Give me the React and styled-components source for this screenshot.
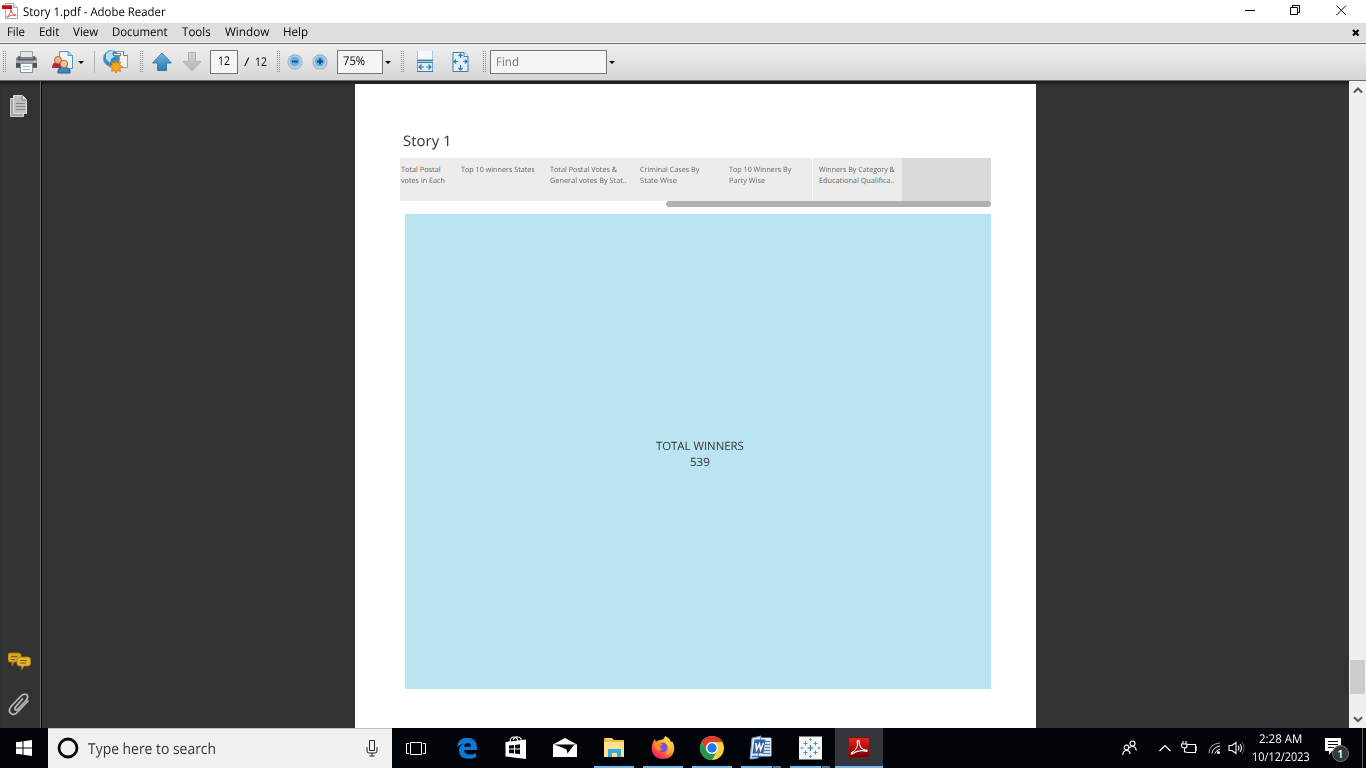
import React, { useLayoutEffect, useRef, useState } from "react";
import styled, { createGlobalStyle } from "styled-components";

const GlobalStyle = createGlobalStyle`
  * { box-sizing: border-box; }
  body { margin: 0; background: #333; overflow: hidden; font-family: "Open Sans", "Noto Sans", sans-serif; }
  svg { display: block; }
`;

const Screen = styled.div`
  width: 1366px;
  height: 768px;
  display: flex;
  flex-direction: column;
  overflow: hidden;
`;

const LineText = styled.span`
  flex: none;
  display: block;
  white-space: nowrap;
  width: ${(p) => p.$w}px;
  height: ${(p) => p.$h}px;
  line-height: ${(p) => p.$h}px;
  margin-left: ${(p) => p.$gap || 0}px;
  font-size: ${(p) => p.$size}px;
  color: ${(p) => p.$color};
  text-rendering: geometricPrecision;
`;
const Glyphs = styled.span`
  display: inline-block;
  transform-origin: 0 50%;
`;

const TitleBar = styled.header`
  height: 23px;
  flex: none;
  background: #fff;
  display: flex;
  align-items: flex-start;
  padding: 3px 0 0 2px;
`;
const TitleText = styled.div`
  margin: 1px auto 0 5px;
`;
const WindowButtons = styled.div`
  display: flex;
  gap: 35px;
  padding: 1px 19px 0 0;
`;

const MenuBar = styled.nav`
  height: 20px;
  flex: none;
  background: #dedede;
  border-bottom: 1px solid #f6f6f6;
  display: flex;
  padding: 1px 6px 0 7px;
  gap: 14px;
`;
const CloseDoc = styled.div`
  margin: 4px 0 0 auto;
`;

const ToolBar = styled.div`
  height: 38px;
  flex: none;
  display: flex;
  align-items: center;
  background: linear-gradient(#f0f0f0, #d5d5d5);
  border-top: 1px solid #6a6d6a;
  border-bottom: 1px solid #6a6d6a;
`;
const Tool = styled.div`
  flex: none;
  width: ${(p) => p.$w}px;
  margin-left: ${(p) => p.$gap}px;
`;
const Grip = styled.div`
  flex: none;
  width: 4px;
  height: 22px;
  margin-left: ${(p) => p.$gap}px;
  background-image: linear-gradient(90deg, #8c8c8c 1px, transparent 1px);
  background-size: 2px 2px;
  mask-image: repeating-linear-gradient(#000 0 1px, transparent 1px 2px);
`;
const Divider = styled.div`
  width: 1px;
  height: 22px;
  margin-left: 10px;
  background: #b5b5b5;
`;
const Field = styled.div`
  flex: none;
  width: ${(p) => p.$w}px;
  height: 24px;
  margin-left: ${(p) => p.$gap}px;
  padding: ${(p) => p.$top || 2}px 0 0 ${(p) => p.$pad}px;
  border: 1px solid #777;
  background: #f5f5f5;
`;
const Caret = styled.i`
  flex: none;
  margin-left: ${(p) => p.$gap}px;
  width: 6px;
  border: 3px solid transparent;
  border-top-color: #000;
  border-bottom: 0;
`;

const Body = styled.main`
  height: 647px;
  flex: none;
  display: flex;
  background: #333;
  box-shadow: inset 0 4px 3px -1px #1f1f1f;
`;
const Rail = styled.aside`
  width: 42px;
  border-right: 1px solid #000;
  box-shadow: inset -1px 0 #6b6b6b;
  display: flex;
  flex-direction: column;
  padding: 13px 0 12px 8px;
`;
const RailBottom = styled.div`
  margin-top: auto;
  display: flex;
  flex-direction: column;
  gap: 20px;
`;
const Viewer = styled.section`
  flex: 1;
  padding: 3px 0 0 313px;
`;
const Paper = styled.article`
  width: 681px;
  height: 644px;
  background: #fff;
  padding: 48px 45px 0;
`;
const StoryTitle = styled.div`
  padding-left: 2.5px;
  height: 26px;
`;
const Strip = styled.div`
  width: 591px;
  height: 43px;
  display: grid;
  grid-template-columns: 54px repeat(6, 89.5px);
  background: #ececec;
`;
const StoryPoint = styled.div`
  padding: 7px 0 0 ${(p) => (p.$first ? 1 : p.$split ? 6 : 6.5)}px;
  background: ${(p) => (p.$active ? "#dadada" : "transparent")};
  border-left: ${(p) => (p.$split ? "1px solid #fff" : "0")};
`;
const StripThumb = styled.div`
  width: 325px;
  height: 6px;
  margin-left: 266px;
  border-radius: 3px;
  background: #b1b1b1;
`;
const Sheet = styled.div`
  width: 586px;
  height: 475px;
  margin: 7px 0 0 5px;
  padding: 225px 0 0 4px;
  background: #bae4f2;
  display: flex;
  flex-direction: column;
  align-items: center;
`;
const ScrollBar = styled.div`
  width: 17px;
  background: #f0f0f0;
  display: flex;
  flex-direction: column;
  align-items: center;
  padding: 6px 0 5px;
`;
const ScrollThumb = styled.div`
  width: 15px;
  height: 34px;
  margin: auto 0 22px;
  background: #cdcdcd;
`;

const TaskBar = styled.footer`
  height: 40px;
  flex: none;
  display: flex;
  background: #010409;
`;
const Start = styled.div`
  width: 48px;
  padding: 12px 0 0 16px;
`;
const Search = styled.div`
  width: 344px;
  background: #f1f1f1;
  border-top: 1px solid #bcbcbc;
  display: flex;
  align-items: center;
  padding: 0 14px 1px 9px;
  justify-content: space-between;
`;
const SearchPrompt = styled.div`
  display: flex;
  align-items: flex-end;
  gap: 9px;
`;
const Apps = styled.div`
  display: flex;
  gap: 1px;
`;
const AppButton = styled.div`
  width: 48px;
  height: 40px;
  margin-right: ${(p) => p.$after || 0}px;
  display: flex;
  flex-direction: column;
  align-items: center;
  justify-content: space-between;
  padding-top: 7px;
  background: ${(p) => (p.$active ? "#33363a" : "transparent")};
`;
const Running = styled.div`
  width: ${(p) => (p.$active ? 48 : 40)}px;
  height: 2px;
  background: ${(p) =>
    p.$stacked ? "linear-gradient(90deg,#76b9ed 31px,#17212b 31px 32px,#4f7c9f 32px)" : "#76b9ed"};
`;
const Tray = styled.div`
  margin-left: auto;
  display: flex;
  align-items: center;
`;
const TrayItem = styled.div`
  width: ${(p) => p.$w}px;
  margin-right: ${(p) => p.$after}px;
`;
const Clock = styled.div`
  width: 62px;
  margin-right: 12px;
  padding-bottom: 1px;
`;
const Notifications = styled.div`
  width: 24px;
  height: 27px;
  margin-right: 13px;
  display: grid;
`;
const Badge = styled.span`
  grid-area: 1 / 1;
  align-self: end;
  justify-self: end;
  width: 17px;
  height: 17px;
  border: 1px solid #777;
  border-radius: 50%;
  background: #35383c;
  color: #fff;
  font-size: 11px;
  font-weight: 600;
  line-height: 15px;
  text-align: center;
`;
const NoteIcon = styled.svg`
  grid-area: 1 / 1;
`;
const PeekEdge = styled.div`
  width: 4px;
  height: 40px;
  border-left: 1px solid #5b5d60;
`;

/* One line of text, condensed or widened to fill its measure */
function Line({ children, w, size = 12, h = 16, color = "#000", gap }) {
  const ref = useRef(null);
  const [stretch, setStretch] = useState(1);
  useLayoutEffect(() => {
    const fit = () => setStretch(w / ref.current.offsetWidth);
    fit();
    document.fonts.ready.then(fit);
  }, [w]);
  return (
    <LineText $w={w} $h={h} $size={size} $color={color} $gap={gap}>
      <Glyphs ref={ref} style={{ transform: `scaleX(${stretch})` }}>{children}</Glyphs>
    </LineText>
  );
}

const acrobatPath = "M2 14C7 11 9 6 8 2c0-2 2-2 2 0 0 5 3 9 8 9 2 1 0 2-2 1-5-1-9 0-13 3-2 1-2 0-1-1z";

const PdfIcon = () => (
  <svg width="16" height="17" viewBox="0 0 16 17">
    <path d="M3.500 .5h8l4 4v11h-12z" fill="#fff" stroke="#a9a9a9" />
    <path d="M11.500 .5v4h4" fill="#e9e9e9" stroke="#a9a9a9" />
    <path d="M0 2h10v4H0z" fill="#c70d12" />
    <path d="M0 2h10v1H0z" fill="#e33b3b" />
    <g transform="translate(4 6) scale(.54)"><path d={acrobatPath} fill="none" stroke="#e04444" strokeWidth="1.700" /></g>
  </svg>
);

const Printer = () => (
  <svg width="24" height="24" viewBox="0 0 24 24">
    <path d="M5.500 1.500h12v8h-12z" fill="#dfe8ec" stroke="#9aa3a8" />
    <path d="M1 9q0-2 2-2h17q2 0 2 2v9H1z" fill="#7d858b" />
    <path d="M4 6v4h15V6" fill="none" stroke="#4a5156" strokeWidth="1.500" />
    <path d="M1 10.500h21v2.500H1z" fill="#a3abb0" />
    <path d="M1 13h21v4.500H1z" fill="#4c5358" />
    <path d="M5.500 13.500h12v9h-12z" fill="#f5fafc" stroke="#83939d" />
    <path d="M8 16.500h7M8 19.500h7" stroke="#a9bac4" />
    <circle cx="19.500" cy="11.500" r="1" fill="#cde7ba" />
  </svg>
);
const Collaborate = () => (
  <svg width="23" height="24" viewBox="0 0 23 24">
    <path d="M7.500 1.500h9l4 4v13h-13z" fill="#edf5fc" stroke="#5a93bf" />
    <path d="M16 1.500v4h5" fill="#b8d8ef" stroke="#5a93bf" />
    <path d="M0 18q0-6 5-6t6 5v1z" fill="#a82e47" />
    <circle cx="6" cy="10" r="3.500" fill="#f0b585" stroke="#b66b3f" />
    <path d="M6 23v-3q2-3 6-3t6 3v3z" fill="#3d88c0" stroke="#28618d" />
    <circle cx="12" cy="14" r="3.700" fill="#f6c193" stroke="#b87343" />
  </svg>
);
const GlobeStar = () => (
  <svg width="27" height="26" viewBox="0 0 27 26">
    <path d="M11.500 2.500h9l4 4v12h-13z" fill="#f1f2f2" stroke="#9b9b9b" />
    <path d="M20.500 2.500v4h4" fill="#fff" stroke="#777" />
    <circle cx="8.500" cy="9.500" r="8" fill="#3989c3" stroke="#6399c1" />
    <path d="M3 5q3-4 8-3.500L9 5l3 2-4 3-1 4-4-4z" fill="#b9dff4" />
    <path d="M10 5.500h8" stroke="#7a7f82" strokeWidth="3" />
    <path d="M11 5.500h6" stroke="#f8f8f8" />
    <path d="M13 11.500l1.500 2.500 3-1-.8 3 2.800 1.700-2.800 1.600.8 3-3-.8L13 24l-1.500-2.500-3 .8.8-3L6.500 17.700 9.300 16l-.8-3 3 1z" fill="#f7a51f" stroke="#c8730d" strokeWidth=".8" />
  </svg>
);
const Arrow = ({ down }) => (
  <svg width="20" height="20" viewBox="0 0 20 20">
    <defs>
      <linearGradient id={down ? "ad" : "au"} x2="0" y2="1">
        <stop stopColor={down ? "#d0d0d0" : "#73b7e2"} />
        <stop offset="1" stopColor={down ? "#b5b5b5" : "#2879b8"} />
      </linearGradient>
    </defs>
    <path
      d={down ? "M6.500.5h7v9h5.500L10 18.800 1 9.500h5.500z" : "M10 1l9.500 10h-5v7.500h-9V11h-5z"}
      fill={down ? "url(#ad)" : "url(#au)"}
      stroke={down ? "#aaa" : "#2a6d9f"}
      strokeWidth=".8"
    />
  </svg>
);
const ZoomDot = ({ plus }) => (
  <svg width="16" height="16" viewBox="0 0 16 16">
    <circle cx="8" cy="8" r="7" fill="#a9d5ef" stroke="#a6b6c1" strokeWidth="1.300" />
    <circle cx="7.800" cy="7.500" r="4.800" fill="#69b0de" />
    <path d={plus ? "M5 7.500h6M8 4.500v6" : "M5 7.500h6"} stroke="#0c4b8c" strokeWidth="1.800" />
  </svg>
);
const FitWidth = () => (
  <svg width="18" height="22" viewBox="0 0 18 22">
    <path d="M1.500 0v9h15V0" fill="#f5f9fc" stroke="#b1c5d3" />
    <path d="M1 9.500h16" stroke="#3d7daa" strokeWidth="1.500" />
    <path d="M1.500 20V11.500h15V20" fill="#ddecf5" stroke="#78a3c0" />
    <path d="M1 20.500h16M1 11.500h16" stroke="#3d7daa" />
    <path d="M3 16h5M10 16h5M5.500 13.500L3 16l2.500 2.500M12.500 13.500L15 16l-2.500 2.500" fill="none" stroke="#2d78ad" strokeWidth="1.200" />
  </svg>
);
const FitPage = () => (
  <svg width="17" height="22" viewBox="0 0 17 22">
    <path d="M1 1.500h11l4 4v15H1z" fill="#e4f0f8" stroke="#3d7fae" />
    <path d="M12 1.500v4h4" fill="#fff" stroke="#3d7fae" />
    <path d="M8.500 3v4M8.500 14v5M2 10.500h4M11 10.500h4M6.500 5l2-2 2 2M6.500 17l2 2 2-2M4 8.500l-2 2 2 2M13 8.500l2 2-2 2" fill="none" stroke="#2d78ad" strokeWidth="1.200" />
  </svg>
);
const Pages = () => (
  <svg width="20" height="24" viewBox="0 0 20 24">
    <path d="M2.500 4.500h13v18h-13z" fill="#a5a5a5" stroke="#d0d0d0" />
    <path d="M5.500 1.500h9l4 4v14h-13z" fill="#c0c0c0" stroke="#dedede" />
    <path d="M14 1.500v4.500h4.500" fill="#e3e3e3" stroke="#777" />
    <path d="M8 9.500h9M8 12.500h9M8 15.500h9" stroke="#858585" />
  </svg>
);
const Comments = () => (
  <svg width="24" height="20" viewBox="0 0 24 20">
    <path d="M2 1h9q2 0 2 2v5q0 2-2 2H6l-2 4v-4H2q-2 0-2-2V3q0-2 2-2z" fill="#d9a51e" stroke="#a87611" strokeWidth=".8" />
    <path d="M11 5h9q2.500 0 2.500 2.500v4Q22.500 14 20 14h-4l-2.500 4v-4H11q-2 0-2-2.500v-4Q9 5 11 5z" fill="#e5b828" stroke="#a87611" strokeWidth=".8" />
    <path d="M3 4.500h6M3 7.500h4M12 8.500h7M12 11h6" stroke="#795819" strokeWidth="1.200" />
  </svg>
);
const Clip = () => (
  <svg width="23" height="24" viewBox="0 0 23 24">
    <path d="M14.500 7L7.500 15q-1.500 3 .8 3 1-.2 2-1.500L18 8.500q3-4 .5-6-3-1.500-6 2L3.500 14q-4 5-.5 7.500Q6.500 24 10.500 19l9.500-10" fill="none" stroke="#b5b5b5" strokeWidth="1.800" strokeLinecap="round" />
  </svg>
);
const Chevron = ({ down }) => (
  <svg width="10" height="7" viewBox="0 0 10 7">
    <path d={down ? "M1 1.200l4 4 4-4" : "M1 5.500l4-4 4 4"} fill="none" stroke="#555" strokeWidth="2" />
  </svg>
);

const EdgeIcon = () => (
  <svg width="22" height="26" viewBox="0 -2 22 26">
    <path d="M1 10Q2 .8 11.500.8 21 1.200 21 10.500V13H8q.5 4.500 6 4.500 3.500 0 6-1.600v4q-3 1.900-7 1.900Q3 21.800 3 13.500q0-5 5-7Q4 7 1 10zm7-.3h7Q15 6 11.800 6 8.500 6.300 8 9.700z" fill="#0a7bd9" />
  </svg>
);
const Store = () => (
  <svg width="22" height="26" viewBox="0 0 22 26">
    <path d="M5 7q0-5 4-5 3 0 4 4M8 5q2-4 5-3 3 0 4 5" fill="none" stroke="#fff" strokeWidth="1.200" />
    <path d="M.5 7L21 4.500V24L.5 21.500z" fill="#fff" />
    <path d="M4 10.500l5-.5v3.500H4zM10 10l5-.7v4.200h-5zM4 14.500h5v4l-5-.6zM10 14.500h5v4.700l-5-.6z" fill="#05070b" />
  </svg>
);
const Mail = () => (
  <svg width="24" height="26" viewBox="0 0 24 26">
    <path d="M0 9.500L12 3l12 6.500V22H0z" fill="#fff" />
    <path d="M1 9.500h22L12 13.500z" fill="#05070b" />
    <path d="M10.500 13L21 10l-6.500 8.500-1-4z" fill="#05070b" />
  </svg>
);
const Folder = () => (
  <svg width="22" height="26" viewBox="0 0 22 26">
    <path d="M1 4q0-1 1-1h7l2 2h10v16H1z" fill="#f1bd35" />
    <path d="M1 7h20v15H1z" fill="#ffe28b" />
    <path d="M3 4h6" stroke="#fff3bd" />
    <path d="M5 22v-8h13v8h-4v-4H9v4z" fill="#36a9e1" />
  </svg>
);
const Firefox = () => (
  <svg width="24" height="26" viewBox="0 0 24 26">
    <defs>
      <linearGradient id="ff" x1=".9" y1="0" x2=".2" y2="1">
        <stop stopColor="#fff04a" /><stop offset=".4" stopColor="#ffb02e" /><stop offset=".75" stopColor="#ff4a3d" /><stop offset="1" stopColor="#e31587" />
      </linearGradient>
    </defs>
    <path d="M14 1q5 2 6 6 1 0 1-1 3 5 2 10-2 8-11 8T1 16Q0 9 4 4l1 3q2-2 4-2 4 0 5-4z" fill="url(#ff)" />
    <circle cx="11.500" cy="12.500" r="5" fill="#7652d8" />
    <path d="M4 8q3-2 5 0l3 1-3 2.500q0 2 3 2.500-3 3-6 1-3-2-2-7z" fill="#ff8b24" />
    <path d="M14 2q1 4 4 6 3 3 1 8-1 3-4 4 6-6 2-10-4-3-3-8z" fill="#ffd43a" />
  </svg>
);
const Chrome = () => (
  <svg width="24" height="26" viewBox="0 0 24 26">
    <circle cx="12" cy="13" r="12" fill="#ffcd40" />
    <path d="M1.600 7A12 12 0 0 1 22.400 7H12a6 6 0 0 0-5.200 9z" fill="#e33b2e" />
    <path d="M1.600 7l5.200 9a6 6 0 0 0 10.400 0L12 25A12 12 0 0 1 1.600 7z" fill="#219653" />
    <circle cx="12" cy="13" r="6" fill="#fff" />
    <circle cx="12" cy="13" r="4.700" fill="#2379e8" />
  </svg>
);
const Word = () => (
  <svg width="24" height="26" viewBox="0 0 24 26">
    <path d="M6 3h16v18H6z" fill="#fff" stroke="#b7c6df" />
    <path d="M16 6.500h5M16 9.500h5M16 12.500h5M15 15.500h6M14 18.500h7" stroke="#5278b4" strokeWidth="1.500" />
    <path d="M3 3q5-1 9-2L9 23q-5 1-8 1Q2 14 3 3z" fill="#d8e6f7" stroke="#7493c1" />
    <path d="M5.500 4.500h11l-2 14h-11z" fill="#3563a8" />
    <path d="M7 8l.5 7 3-6 1 6 3-7" fill="none" stroke="#fff" strokeWidth="1.500" />
    <path d="M3 21.500h9" stroke="#3c69af" strokeWidth="1.500" />
  </svg>
);
const Tableau = () => (
  <svg width="23" height="26" viewBox="0 0 23 26">
    <path d="M0 1.500h23v23H0z" fill="#f5f5f3" />
    <path d="M8.500 13h6M11.500 10v6" stroke="#337eac" strokeWidth="1.200" />
    <path d="M4.500 8.500h4M6.500 6.500v4M14.500 8.500h4M16.500 6.500v4M4.500 17.500h4M6.500 15.500v4M14.500 17.500h4M16.500 15.500v4" stroke="#5b8da9" />
    <path d="M10 4.500h3M11.500 3v3M10 21.500h3M11.500 20v3M1.500 13h3M3 11.500v3M18.500 13h3M20 11.500v3" stroke="#68a6c8" />
  </svg>
);
const AcrobatIcon = () => (
  <svg width="22" height="26" viewBox="0 0 22 26">
    <defs><linearGradient id="ac" x2="0" y2="1"><stop stopColor="#e12b21" /><stop offset=".5" stopColor="#b40c0b" /><stop offset="1" stopColor="#710306" /></linearGradient></defs>
    <path d="M.5 2.500h21v20H.5z" fill="url(#ac)" stroke="#76191a" />
    <g transform="translate(2 5) scale(.91)"><path d={acrobatPath} fill="none" stroke="#fff" strokeWidth="1.300" /></g>
  </svg>
);
const TaskView = () => (
  <svg width="20" height="26" viewBox="0 0 20 26">
    <path d="M4.500 7.500h11v12h-11zM3 8.500H.5v10H3M17 8.500h2.500v10H17" fill="none" stroke="#fff" />
  </svg>
);

const apps = [
  { Icon: TaskView, after: 2 },
  { Icon: EdgeIcon },
  { Icon: Store },
  { Icon: Mail },
  { Icon: Folder, running: true },
  { Icon: Firefox, running: true },
  { Icon: Chrome, running: true },
  { Icon: Word, running: true, stacked: true },
  { Icon: Tableau, running: true, stacked: true },
  { Icon: AcrobatIcon, running: true, active: true },
];

const menu = [["File", 18], ["Edit", 20], ["View", 25], ["Document", 56], ["Tools", 29], ["Window", 44], ["Help", 25]];

const points = [
  { lines: [["Total Postal", 40], ["votes in Each", 43.5]] },
  { lines: [["Top 10 winners States", 74]] },
  { lines: [["Total Postal Votes &", 67.5], ["General votes By Stat..", 76.5]] },
  { lines: [["Criminal Cases By", 59], ["State Wise", 36.5]] },
  { lines: [["Top 10 Winners By", 62], ["Party Wise", 36.5]] },
  { lines: [["Winners By Category &", 76], ["Educational Qualifica..", 75]], split: true },
  { lines: [], active: true },
];

export default function App() {
  return (
    <Screen>
      <GlobalStyle />
      <TitleBar>
        <PdfIcon />
        <TitleText><Line w={142.500}>Story 1.pdf - Adobe Reader</Line></TitleText>
        <WindowButtons>
          <svg width="10" height="12"><path d="M0 6.500h10" stroke="#000" /></svg>
          <svg width="11" height="12"><path d="M.5 3.500h7v7h-7zM2.500 3.500v-2h7v7h-2" fill="none" stroke="#000" /></svg>
          <svg width="11" height="12"><path d="M.5 1.500l9.500 9.500M10 1.500L.5 11" stroke="#000" /></svg>
        </WindowButtons>
      </TitleBar>
      <MenuBar>
        {menu.map(([name, w]) => <Line key={name} w={w}>{name}</Line>)}
        <CloseDoc><svg width="8" height="9"><path d="M1 2l5.500 5.500M6.500 2L1 7.500" stroke="#000" strokeWidth="2.200" /></svg></CloseDoc>
      </MenuBar>
      <ToolBar>
        <Grip $gap={3} />
        <Tool $gap={8} $w={24}><Printer /></Tool>
        <Tool $gap={13} $w={23}><Collaborate /></Tool>
        <Caret $gap={3} />
        <Divider />
        <Tool $gap={8} $w={27}><GlobeStar /></Tool>
        <Grip $gap={10} />
        <Tool $gap={8} $w={20}><Arrow /></Tool>
        <Tool $gap={10} $w={20}><Arrow down /></Tool>
        <Field $gap={8} $w={28} $pad={7}><Line w={12}>12</Line></Field>
        <Line w={5} gap={6}>/</Line>
        <Line w={12} gap={6}>12</Line>
        <Grip $gap={10} />
        <Tool $gap={6} $w={16}><ZoomDot /></Tool>
        <Tool $gap={9} $w={16}><ZoomDot plus /></Tool>
        <Field $gap={9} $w={46} $pad={5}><Line w={22.500}>75%</Line></Field>
        <Caret $gap={2} />
        <Grip $gap={10} />
        <Tool $gap={11} $w={18}><FitWidth /></Tool>
        <Tool $gap={18} $w={17}><FitPage /></Tool>
        <Grip $gap={14} />
        <Field $gap={3} $w={117} $pad={4.500} $top={3}><Line w={23} color="#757575">Find</Line></Field>
        <Caret $gap={2} />
      </ToolBar>
      <Body>
        <Rail>
          <Pages />
          <RailBottom><Comments /><Clip /></RailBottom>
        </Rail>
        <Viewer>
          <Paper>
            <StoryTitle><Line w={48.500} size={14.500} h={20} color="#333">Story 1</Line></StoryTitle>
            <Strip>
              {points.map((p, i) => (
                <StoryPoint key={i} $first={i === 0} $active={p.active} $split={p.split}>
                  {p.lines.map(([t, w]) => <Line key={t} w={w} size={7.300} h={11} color="#666">{t}</Line>)}
                </StoryPoint>
              ))}
            </Strip>
            <StripThumb />
            <Sheet>
              <Line w={88} size={11.500} color="#333">TOTAL WINNERS</Line>
              <Line w={20} size={11.500} color="#333">539</Line>
            </Sheet>
          </Paper>
        </Viewer>
        <ScrollBar>
          <Chevron />
          <ScrollThumb />
          <Chevron down />
        </ScrollBar>
      </Body>
      <TaskBar>
        <Start>
          <svg width="16" height="16"><path d="M0 2.300L6.500 1.400V7.500H0zM7.500 1.200L16 0v7.500H7.500zM0 8.500h6.500v6.100L0 13.700zM7.500 8.500H16V16l-8.500-1.200z" fill="#fff" /></svg>
        </Start>
        <Search>
          <SearchPrompt>
            <svg width="22" height="22"><circle cx="11" cy="11" r="9" fill="none" stroke="#0a0a0a" strokeWidth="2.800" /></svg>
            <Line w={128} size={15} h={20} color="#333">Type here to search</Line>
          </SearchPrompt>
          <svg width="12" height="18"><path d="M3.500 1.500h5v10h-5zM1 8v4q0 2 2 2h6q2 0 2-2V8M6 14v3M3.500 17h5" fill="none" stroke="#222" /></svg>
        </Search>
        <Apps>
          {apps.map(({ Icon, after, running, stacked, active }, i) => (
            <AppButton key={i} $after={after} $active={active}>
              <Icon />
              {running && <Running $stacked={stacked} $active={active} />}
            </AppButton>
          ))}
        </Apps>
        <Tray>
          <TrayItem $w={15} $after={22}>
            <svg width="15" height="16"><g fill="none" stroke="#fff" strokeWidth="1.200"><circle cx="10.500" cy="3.500" r="2.500" /><circle cx="4.500" cy="7.500" r="2.300" /><path d="M.8 15q.2-4.500 3.700-4.500T8 14M7.500 8q1-1.500 3-1.500 3.500 0 3.700 4" /></g></svg>
          </TrayItem>
          <TrayItem $w={12} $after={10}>
            <svg width="12" height="8"><path d="M.5 7L6 1.500 11.500 7" fill="none" stroke="#fff" strokeWidth="1.200" /></svg>
          </TrayItem>
          <TrayItem $w={16} $after={11}>
            <svg width="16" height="14"><path d="M5.500 3.500h9v8h-9M14.500 6H16v3h-1.500M2 0v3M5 0v3M.5 3h5.500v2q0 2-2.500 2T.5 5zM3.500 7v4h2" fill="none" stroke="#fff" strokeWidth="1.100" /></svg>
          </TrayItem>
          <TrayItem $w={13} $after={7}>
            <svg width="13" height="14"><g fill="none" stroke="#fff"><path d="M4 12.500Q5 6 12 5M7 12.500Q8 9 12 8" /><path d="M1 12.500Q1 3 12 2" stroke="#aaa" /></g><circle cx="10.500" cy="11.500" r="1.500" fill="#fff" /></svg>
          </TrayItem>
          <TrayItem $w={17} $after={6}>
            <svg width="17" height="14"><path d="M1 4.500h3l4-3v11l-4-3H1zM10 4.500q2 2.500 0 5M12 3q3 4 0 8" fill="none" stroke="#fff" strokeWidth="1.100" /><path d="M14 1q4 6 0 12" fill="none" stroke="#666" /></svg>
          </TrayItem>
          <Clock>
            <Line w={43} h={18} color="#fff" gap={8}>2:28 AM</Line>
            <Line w={58} h={18} color="#fff" gap={1}>10/12/2023</Line>
          </Clock>
          <Notifications>
            <NoteIcon width="24" height="27"><path d="M0 3h16v13H7l-3 4v-4H0z" fill="#fff" /><path d="M3 6.500h10M3 9.500h10M3 12.500h6" stroke="#05070b" /></NoteIcon>
            <Badge>1</Badge>
          </Notifications>
          <PeekEdge />
        </Tray>
      </TaskBar>
    </Screen>
  );
}
